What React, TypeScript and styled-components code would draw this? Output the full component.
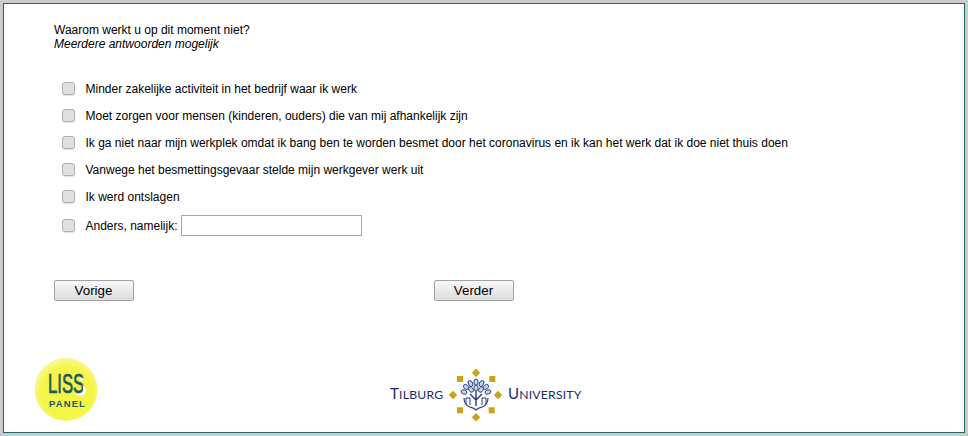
import React from 'react';
import styled, { createGlobalStyle } from 'styled-components';

const GlobalStyle = createGlobalStyle`
  html, body {
    margin: 0;
    padding: 0;
    height: 100%;
    background: #cccccc;
  }
  body {
    box-sizing: border-box;
    padding: 3px;
  }
`;

const options = [
  'Minder zakelijke activiteit in het bedrijf waar ik werk',
  'Moet zorgen voor mensen (kinderen, ouders) die van mij afhankelijk zijn',
  'Ik ga niet naar mijn werkplek omdat ik bang ben te worden besmet door het coronavirus en ik kan het werk dat ik doe niet thuis doen',
  'Vanwege het besmettingsgevaar stelde mijn werkgever werk uit',
  'Ik werd ontslagen',
];

const LissLogo: React.FC = () => (
  <svg width="66" height="66" viewBox="0 0 66 66">
    <defs>
      <radialGradient id="lissBall" cx="0.52" cy="0.55" r="0.52">
        <stop offset="0" stopColor="#f3f540" />
        <stop offset="0.8" stopColor="#f4f648" />
        <stop offset="1" stopColor="#f8f98c" />
      </radialGradient>
    </defs>
    <circle cx="32" cy="31.500" r="31.500" fill="url(#lissBall)" />
    <text x="14" y="35" fontFamily="'Liberation Sans', sans-serif" fontSize="27" fill="#1f5565" stroke="#1f5565" strokeWidth="0.700" transform="translate(14 0) scale(0.62 1) translate(-14 0)">LISS</text>
    <path d="M41 35.500c3 1 6 0 7.500-2 1.200-2 1-4.500-.5-6.500 3.500 1.500 5 5 3.500 8-1.800 3.500-7.500 3.500-10.500.5z" fill="#ffffff" />
    <circle cx="47.500" cy="21" r="1.600" fill="#ffffff" />
    <text x="15" y="49" fontFamily="'Liberation Sans', sans-serif" fontSize="9.500" fontWeight="700" letterSpacing="1.100" fill="#1f5565">PANEL</text>
  </svg>
);

const leaves = [
  [86, 15, 0], [80.500, 16.500, -30], [91.500, 16.500, 30], [76, 20, -50], [96, 20, 50],
  [74, 25, -70], [98, 25, 70], [81, 22.500, -35], [91, 22.500, 35], [86, 21, 0],
];

const TilburgLogo: React.FC = () => (
  <svg width="194" height="56" viewBox="0 0 194 56">
    <text x="0" y="31.500" fontFamily="Lato, 'Open Sans', sans-serif" fontSize="15" fill="#1a2a68" letterSpacing="0.200">
      T<tspan fontSize="12.200">ILBURG</tspan>
    </text>
    <text x="118" y="31.500" fontFamily="Lato, 'Open Sans', sans-serif" fontSize="15" fill="#1a2a68" letterSpacing="0.200">
      U<tspan fontSize="12.200">NIVERSITY</tspan>
    </text>
    <g fill="#c9a414">
      <path d="M86 1.500l4.200 4.200-4.200 4.200-4.200-4.200z" />
      <path d="M86 46.100l4.200 4.200-4.200 4.200-4.200-4.200z" />
      <path d="M63 23.800l4.200 4.200-4.200 4.200-4.200-4.200z" />
      <path d="M108 23.800l4.200 4.200-4.200 4.200-4.200-4.200z" />
      <rect x="67" y="9" width="6" height="6" />
      <rect x="99.300" y="9" width="6" height="6" />
      <rect x="67" y="40.300" width="6" height="6" />
      <rect x="98.700" y="40.300" width="6" height="6" />
    </g>
    <g fill="#c9d3ea" stroke="#26397f" strokeWidth="0.900">
      {leaves.map(([x, y, r]) => (
        <ellipse key={`${x}-${y}`} cx={x} cy={y} rx="2.100" ry="3" transform={`rotate(${r} ${x} ${y})`} />
      ))}
    </g>
    <g fill="none" stroke="#26397f">
      <path d="M86 39V24M86 33l-6-6M86 33l6-6" strokeWidth="1.400" />
      <path d="M74 31c0 5 3 8 6 9 2 .7 4 1 6 3 2-2 4-2.300 6-3 3-1 6-4 6-9" strokeWidth="1.100" />
      <path d="M76 37v-6h4v7M92 38v-7h4v6" strokeWidth="1" />
    </g>
  </svg>
);

const App: React.FC = () => (
  <>
    <GlobalStyle />
    <Frame>
      <Question>
        Waarom werkt u op dit moment niet?
        <Hint>Meerdere antwoorden mogelijk</Hint>
      </Question>
      <OptionList>
        {options.map((text) => (
          <OptionRow key={text}>
            <CheckBox type="checkbox" />
            <OptionLabel>{text}</OptionLabel>
          </OptionRow>
        ))}
        <OtherRow>
          <CheckBox type="checkbox" />
          <OptionLabel>Anders, namelijk:</OptionLabel>
          <OtherInput type="text" />
        </OtherRow>
      </OptionList>
      <ButtonBar>
        <NavButton type="button">Vorige</NavButton>
        <NavButton type="button">Verder</NavButton>
      </ButtonBar>
      <Footer>
        <LissSlot>
          <LissLogo />
        </LissSlot>
        <TilburgSlot>
          <TilburgLogo />
        </TilburgSlot>
      </Footer>
    </Frame>
  </>
);

const Frame = styled.div`
  box-sizing: border-box;
  width: 962px;
  height: 430px;
  background: #ffffff;
  border: 1px solid #1d6a6a;
  padding: 19px 0 0 50px;
  display: flex;
  flex-direction: column;
  font-family: 'Liberation Sans', Arial, sans-serif;
  font-size: 12px;
  color: #000000;
`;

const Question = styled.div`
  line-height: 14px;
`;

const Hint = styled.em`
  display: block;
`;

const OptionList = styled.div`
  margin-top: 24px;
  display: flex;
  flex-direction: column;
`;

const OptionRow = styled.label`
  display: flex;
  align-items: center;
  height: 27px;
  padding-left: 8px;
`;

const OtherRow = styled(OptionRow)`
  height: 31px;
`;

const CheckBox = styled.input`
  appearance: none;
  box-sizing: border-box;
  width: 13px;
  height: 13px;
  margin: 0 10.500px 0 0;
  flex: none;
  background: #e0e0e0;
  border: 1px solid #b0b0b0;
  border-radius: 3px;
  box-shadow: 0 1px 1px rgba(0, 0, 0, 0.12);
`;

const OptionLabel = styled.span`
  white-space: nowrap;
`;

const OtherInput = styled.input`
  box-sizing: border-box;
  width: 181px;
  height: 21px;
  margin: 0 0 0 3px;
  border: 1px solid #a9a9a9;
  background: #ffffff;
  padding: 0 2px;
`;

const ButtonBar = styled.div`
  margin-top: 39px;
  display: flex;
  gap: 300px;
`;

const NavButton = styled.button`
  box-sizing: border-box;
  width: 80px;
  height: 21px;
  padding: 0 1px 0 0;
  border: 1px solid #a3a3a3;
  border-radius: 2px;
  background: linear-gradient(#f8f8f8, #dcdcdc);
  font-family: 'Liberation Sans', Arial, sans-serif;
  font-size: 13.330px;
  color: #000000;
`;

const Footer = styled.div`
  margin: 57px 0 0 -20px;
  display: flex;
`;

const LissSlot = styled.div`
  width: 356px;
  flex: none;
`;

const TilburgSlot = styled.div`
  margin-top: 9px;
`;

export default App;
